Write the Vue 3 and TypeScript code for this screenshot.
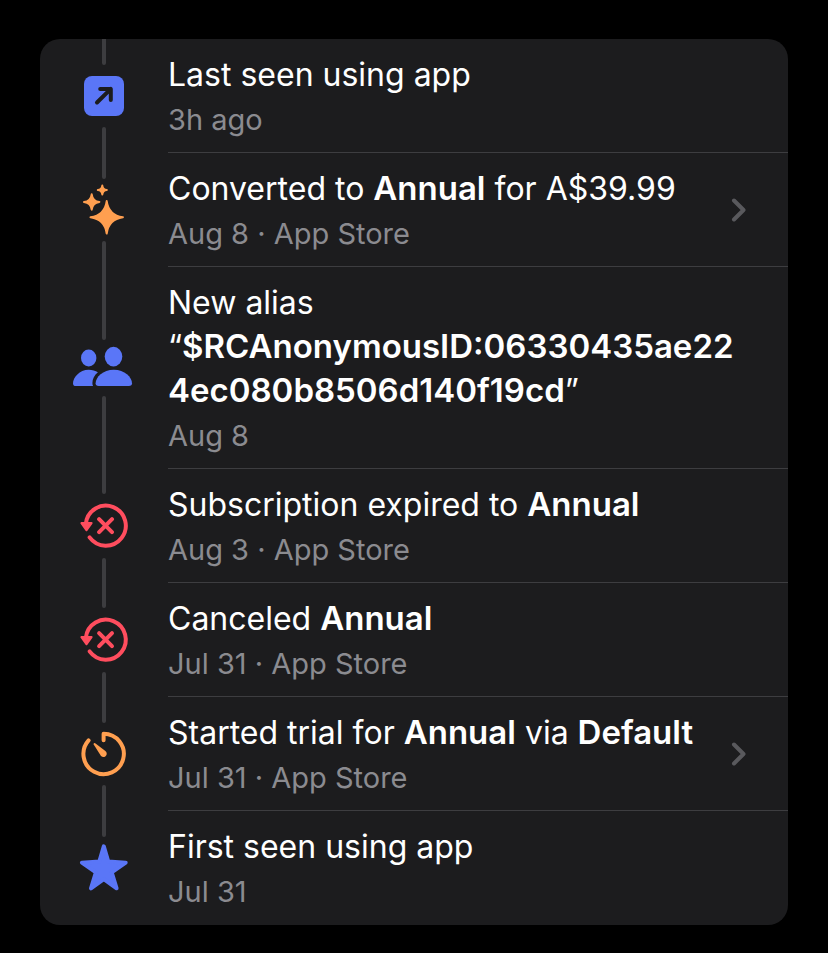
<script setup lang="ts">
type IconName = 'open' | 'sparkles' | 'people' | 'cancel' | 'timer' | 'star'

interface TextPart {
  text: string
  strong?: boolean
  breakBefore?: boolean
}

interface TimelineEvent {
  id: number
  icon: IconName
  title: TextPart[]
  detail: string
  link?: boolean
}

const events: TimelineEvent[] = [
  { id: 1, icon: 'open', title: [{ text: 'Last seen using app' }], detail: '3h ago' },
  {
    id: 2,
    icon: 'sparkles',
    title: [{ text: 'Converted to ' }, { text: 'Annual', strong: true }, { text: ' for A$39.99' }],
    detail: 'Aug 8 · App Store',
    link: true,
  },
  {
    id: 3,
    icon: 'people',
    title: [
      { text: 'New alias' },
      { text: '“', breakBefore: true },
      { text: '$RCAnonymousID:06330435ae224ec080b8506d140f19cd', strong: true },
      { text: '”' },
    ],
    detail: 'Aug 8',
  },
  {
    id: 4,
    icon: 'cancel',
    title: [{ text: 'Subscription expired to ' }, { text: 'Annual', strong: true }],
    detail: 'Aug 3 · App Store',
  },
  {
    id: 5,
    icon: 'cancel',
    title: [{ text: 'Canceled ' }, { text: 'Annual', strong: true }],
    detail: 'Jul 31 · App Store',
  },
  {
    id: 6,
    icon: 'timer',
    title: [
      { text: 'Started trial for ' },
      { text: 'Annual', strong: true },
      { text: ' via ' },
      { text: 'Default', strong: true },
    ],
    detail: 'Jul 31 · App Store',
    link: true,
  },
  { id: 7, icon: 'star', title: [{ text: 'First seen using app' }], detail: 'Jul 31' },
]
</script>

<template>
  <main class="page">
    <ol class="card">
      <li v-for="event in events" :key="event.id" class="item">
        <component :is="event.link ? 'button' : 'div'" class="row" :type="event.link ? 'button' : undefined">
          <span class="rail">
            <span class="line line-top"></span>
            <svg :class="['icon', event.icon]" viewBox="0 0 64 64" aria-hidden="true">
              <template v-if="event.icon === 'open'">
                <rect class="fill" x="12" y="12" width="40" height="40" rx="8" />
                <path class="cutout" d="M25 38.5 38.8 24.9M28.2 24.9h10.6v11" />
              </template>
              <template v-else-if="event.icon === 'sparkles'">
                <path class="spark" d="M34.7 23.1Q36.7 37.3 50.9 39.3Q36.7 41.3 34.7 55.5Q32.7 41.3 18.5 39.3Q32.7 37.3 34.7 23.1Z" />
                <path class="spark" d="M19.7 16.3Q20.5 23.2 27.4 24Q20.5 24.8 19.7 31.7Q18.9 24.8 12 24Q18.9 23.2 19.7 16.3Z" />
                <path class="spark" d="M30.3 7.5Q30.7 11.6 34.8 12Q30.7 12.4 30.3 16.5Q29.9 12.4 25.8 12Q29.9 11.6 30.3 7.5Z" />
              </template>
              <template v-else-if="event.icon === 'people'">
                <ellipse class="fill" cx="16.7" cy="22" rx="7.7" ry="8.4" />
                <ellipse class="fill" cx="41.5" cy="20.6" rx="8.8" ry="9.8" />
                <path class="fill" d="M4 50C2 50 1 49 1 47.4C1 41.5 7.5 33.7 16.7 33.7C20.3 33.7 23.4 34.7 25.9 36.3C22.4 39.2 20.4 43.2 20.4 47C20.4 48.2 20.6 49.2 21.1 50Z" />
                <path class="fill" d="M26.7 50C24.6 50 23.6 49 23.6 47.3C23.6 41.2 31 33.7 41.8 33.7C52.6 33.7 60 41.2 60 47.3C60 49 59 50 56.9 50Z" />
              </template>
              <template v-else-if="event.icon === 'cancel'">
                <path class="stroke" d="M13.9 29.5A20 20 0 1 1 17.6 43.4M27.1 25.2 40 38.1M40 25.2 27.1 38.1" />
                <path class="arrowhead" d="M9.4 29.1h10.2l-5.2 7.2Z" />
              </template>
              <template v-else-if="event.icon === 'timer'">
                <path class="stroke" d="M31.6 18.2V11.7A20.2 20.2 0 1 1 16.6 18.4" />
                <path class="fill" d="M21.7 22.6C21.2 21.5 22.2 20.6 23.2 21.2L33.4 28.9C37 32.2 32.5 37 29 34Z" />
              </template>
              <template v-else>
                <path class="star-shape" d="M31.8 10.4 36.2 25.4 53.7 26.7 39.7 36.4 44.6 52.3 31.8 43.2 19 52.3 23.9 36.4 9.9 26.7 27.4 25.4Z" />
              </template>
            </svg>
            <span class="line line-bottom"></span>
          </span>
          <span class="content">
            <span class="text">
              <span class="title">
                <template v-for="(part, i) in event.title" :key="i">
                  <br v-if="part.breakBefore" />
                  <strong v-if="part.strong">{{ part.text }}</strong>
                  <template v-else>{{ part.text }}</template>
                </template>
              </span>
              <span class="detail">{{ event.detail }}</span>
            </span>
            <svg v-if="event.link" class="chevron" viewBox="0 0 16 24" aria-hidden="true">
              <path d="M3 2.5 12.5 12 3 21.5" />
            </svg>
          </span>
        </component>
      </li>
    </ol>
  </main>
</template>

<style>
body {
  margin: 0;
  background: #000;
}
</style>

<style scoped>
.page {
  padding: 39px 40px 28px;
  font-family: Inter, 'Liberation Sans', sans-serif;
  color: #fff;
}

.card {
  margin: 0;
  padding: 0;
  list-style: none;
  background: #1c1c1e;
  border-radius: 20px;
  overflow: hidden;
}

.row {
  display: flex;
  width: 100%;
  margin: 0;
  padding: 0;
  border: 0;
  background: none;
  color: inherit;
  font: inherit;
  text-align: left;
}

button.row {
  cursor: pointer;
}

.rail {
  display: flex;
  flex: none;
  flex-direction: column;
  align-items: center;
  width: 128px;
}

.line {
  flex: 1;
  width: 4px;
  background: #3d3d40;
}

.line-top {
  border-radius: 0 0 2px 2px;
}

.line-bottom {
  border-radius: 2px 2px 0 0;
}

.item:last-child .line-bottom {
  visibility: hidden;
}

.icon {
  display: block;
  flex: none;
  width: 64px;
  height: 64px;
  margin: -1px 0;
  color: #5a76f7;
}

.people {
  margin: -4px 0;
}

.sparkles,
.timer {
  color: #ff9f50;
}

.cancel {
  margin: 0;
  color: #ff4d5e;
}

.fill {
  fill: currentColor;
}

.cutout,
.stroke {
  fill: none;
  stroke: currentColor;
  stroke-width: 4;
  stroke-linecap: round;
  stroke-linejoin: round;
}

.cutout {
  stroke: #1c1c1e;
}

.spark,
.arrowhead,
.star-shape {
  fill: currentColor;
  stroke: currentColor;
  stroke-width: 2;
  stroke-linejoin: round;
}

.star-shape {
  stroke-width: 4;
}

.content {
  display: flex;
  flex: 1;
  align-items: center;
  min-width: 0;
  padding-right: 41px;
  border-bottom: 1px solid #3d3d40;
}

.item:last-child .content {
  border-color: transparent;
}

.text {
  flex: 1;
  min-width: 0;
  padding: 14px 0 9px;
}

.title,
.detail {
  display: block;
}

.title {
  font-size: 32px;
  line-height: 44px;
  overflow-wrap: anywhere;
}

.title strong {
  font-size: 33px;
  font-weight: 600;
  line-height: 1;
}

.detail {
  font-size: 29px;
  line-height: 46px;
  color: #8b8b90;
}

.chevron {
  flex: none;
  width: 16px;
  height: 24px;
}

.chevron path {
  fill: none;
  stroke: #59595d;
  stroke-width: 4;
  stroke-linecap: round;
  stroke-linejoin: round;
}
</style>
